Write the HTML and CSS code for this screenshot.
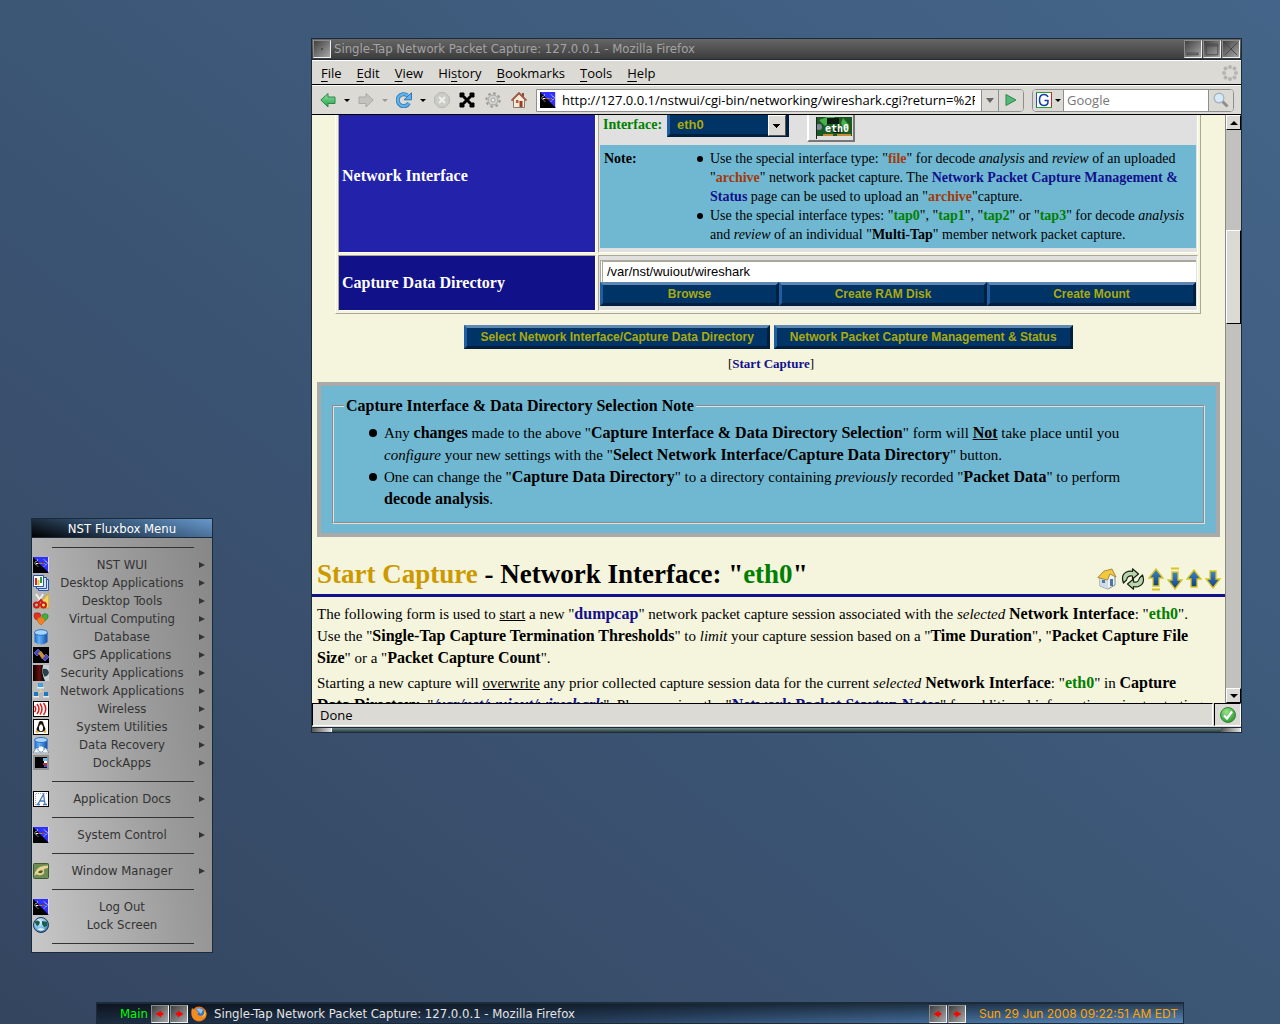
FILE: index.html
```html
<!DOCTYPE html>
<html lang="en">
<head>
<meta charset="utf-8">
<title>Single-Tap Network Packet Capture</title>
<link rel="stylesheet" href="styles.css">
</head>
<body class="desktop">

<svg class="defs" aria-hidden="true">
  <defs>
    <linearGradient id="gGreen" x1="0" y1="0" x2="0" y2="1"><stop offset="0" stop-color="#8fe0a0"/><stop offset="1" stop-color="#25a04c"/></linearGradient>
    <linearGradient id="gBlue" x1="0" y1="0" x2="0" y2="1"><stop offset="0" stop-color="#3f86cf"/><stop offset="1" stop-color="#123f83"/></linearGradient>
    <linearGradient id="gCyl" x1="0" y1="0" x2="1" y2="0"><stop offset="0" stop-color="#1769c9"/><stop offset=".35" stop-color="#63b2f6"/><stop offset="1" stop-color="#0e4fae"/></linearGradient>
    <radialGradient id="gOk" cx=".4" cy=".3" r=".7"><stop offset="0" stop-color="#9be38a"/><stop offset="1" stop-color="#2f9a36"/></radialGradient>
    <radialGradient id="gGlobe" cx=".4" cy=".3" r=".8"><stop offset="0" stop-color="#e6f6ff"/><stop offset=".6" stop-color="#6db4e0"/><stop offset="1" stop-color="#1c4a7c"/></radialGradient>
    <linearGradient id="gEye" x1="0" y1="0" x2="1" y2="0"><stop offset="0" stop-color="#0a0000"/><stop offset=".4" stop-color="#6a0f0c"/><stop offset=".6" stop-color="#101010"/></linearGradient>
    <symbol id="nst" viewBox="0 0 16 16">
      <rect width="16" height="16" fill="#000"/><path d="M0 0H16V16Z" fill="#3030ff"/>
      <path d="M15.500 0V15.500" stroke="#d8d8f8"/>
      <path d="M5 2.500L1.500 6L5 9.500M11 2.500L14.500 6L11 9.500" fill="none" stroke="#fff" stroke-dasharray="1.500 .700"/>
      <path d="M3 6.500H5" stroke="#fff"/><path d="M5 6.500H7" stroke="#f22"/><path d="M7 6.500H9" stroke="#2c2"/><path d="M9 6.500H11" stroke="#f22"/><path d="M11 6.500H12" stroke="#2c2"/>
    </symbol>
    <symbol id="arrowUp" viewBox="0 0 16 20"><path d="M8 1L15 10H11V18H5V10H1Z" fill="url(#gBlue)" stroke="#d8c61c" stroke-width="1.300"/></symbol>
    <symbol id="arrowDown" viewBox="0 0 16 20"><path d="M8 19L15 10H11V2H5V10H1Z" fill="url(#gBlue)" stroke="#d8c61c" stroke-width="1.300"/></symbol>
    <symbol id="redLeft" viewBox="0 0 16 16"><path d="M4 8L9 5V7H11V9H9V11Z" fill="#f00" stroke="#f00" stroke-width=".5"/></symbol>
    <symbol id="redRight" viewBox="0 0 16 16"><path d="M12 8L7 5V7H5V9H7V11Z" fill="#f00" stroke="#f00" stroke-width=".5"/></symbol>
  </defs>
</svg>

<main class="browser" aria-label="Mozilla Firefox">
  <header class="titlebar">
    <button class="bevel" aria-label="Stick"><svg viewBox="0 0 18 18"><rect x="8" y="8" width="2" height="2" fill="#444"/></svg></button>
    <h1 class="title">Single-Tap Network Packet Capture: 127.0.0.1 - Mozilla Firefox</h1>
    <button class="bevel" aria-label="Minimize"><svg viewBox="0 0 18 18"><rect x="2.500" y="13.500" width="12" height="2" fill="none" stroke="#444"/></svg></button>
    <button class="bevel" aria-label="Maximize"><svg viewBox="0 0 18 18"><path d="M2.500 3.500H15.500V15.500H2.500ZM2.500 5.500H15" fill="none" stroke="#444"/></svg></button>
    <button class="bevel" aria-label="Close"><svg viewBox="0 0 18 18"><path d="M2 2L16 16M16 2L2 16" stroke="#444"/></svg></button>
  </header>

  <nav class="menubar">
    <button><u>F</u>ile</button><button><u>E</u>dit</button><button><u>V</u>iew</button><button>Hi<u>s</u>tory</button><button><u>B</u>ookmarks</button><button><u>T</u>ools</button><button><u>H</u>elp</button>
    <svg class="throbber" viewBox="0 0 16 16"><g fill="#b4b4b0"><circle cx="8" cy="2" r="2"/><circle cx="12.500" cy="3.500" r="2"/><circle cx="14" cy="8" r="2"/><circle cx="12.500" cy="12.500" r="2"/><circle cx="8" cy="14" r="2"/><circle cx="3.500" cy="12.500" r="2"/><circle cx="2" cy="8" r="2"/><circle cx="3.500" cy="3.500" r="2"/></g></svg>
  </nav>

  <div class="toolbar">
    <button class="tool" aria-label="Back"><svg viewBox="0 0 16 16"><path d="M.8 8L8 1.500V5H15V11.500H8V15Z" fill="url(#gGreen)" stroke="#2a8a48"/></svg></button>
    <button class="drop" aria-label="Back history"></button>
    <button class="tool" aria-label="Forward"><svg viewBox="0 0 16 16"><path d="M15.200 8L8 1.500V5H1V11.500H8V15Z" fill="#c2c2be" stroke="#a9a9a5"/></svg></button>
    <button class="drop off" aria-label="Forward history"></button>
    <button class="tool" aria-label="Reload"><svg viewBox="0 0 16 16"><path d="M13 11A6 6 0 1 1 11.500 3.500" fill="none" stroke="#2a78b8" stroke-width="4"/><path d="M13 11A6 6 0 1 1 11.500 3.500" fill="none" stroke="#62b2ea" stroke-width="2.400"/><path d="M15.500 .8V7.800H8Z" fill="#62b2ea" stroke="#2a78b8"/></svg></button>
    <button class="drop" aria-label="Reload options"></button>
    <button class="tool" aria-label="Stop"><svg viewBox="0 0 16 16"><path d="M5 .7H11L15.300 5V11L11 15.300H5L.7 11V5Z" fill="#cbcbc7" stroke="#b5b5b1"/><path d="M5 5L11 11M11 5L5 11" stroke="#efefec" stroke-width="2"/></svg></button>
    <button class="tool solo" aria-label="Clear"><svg viewBox="0 0 16 16"><path d="M2.500 2.500L13.500 13.500M13.500 2.500L2.500 13.500" stroke="#000" stroke-width="3"/><path d="M1 1H5V3H3V5H1ZM11 1H15V5H13V3H11ZM1 11H3V13H5V15H1ZM15 11V15H11V13H13V11Z" stroke="#000"/></svg></button>
    <button class="tool solo" aria-label="Settings"><svg viewBox="0 0 16 16"><circle cx="8" cy="8" r="6.700" fill="none" stroke="#9a9a96" stroke-width="2" stroke-dasharray="2.600 2.660"/><circle cx="8" cy="8" r="5" fill="#d2d2ce" stroke="#a4a4a0"/><circle cx="8" cy="8" r="2" fill="#eee" stroke="#a4a4a0"/></svg></button>
    <button class="tool solo" aria-label="Home"><svg viewBox="0 0 16 16"><rect x="11" y="1" width="2" height="5" fill="#8c4a3a"/><path d="M2.500 7.500V15.500H13.500V7.500L8 2Z" fill="#f3ead8" stroke="#8a7a68"/><path d="M.5 8.500L8 1L15.500 8.500" fill="none" stroke="#a25a4a" stroke-width="1.800"/><rect x="5" y="8" width="2.500" height="3" fill="#b5563c"/><rect x="8.500" y="9" width="3" height="6" fill="#a03c22"/></svg></button>
    <div class="field url">
      <svg class="i16" viewBox="0 0 16 16"><use href="#nst"/></svg>
      <input aria-label="Location" value="http://127.0.0.1/nstwui/cgi-bin/networking/wireshark.cgi?return=%2Fnstwui">
      <button class="seg open" aria-label="Show history"></button>
      <button class="seg go" aria-label="Go"><svg viewBox="0 0 12 14"><path d="M1 1.500L11 7L1 12.500Z" fill="#55b878" stroke="#2a8a48"/></svg></button>
    </div>
    <div class="field search">
      <button class="engine" aria-label="Search engine"><svg class="i16" viewBox="0 0 16 16"><rect x=".5" y=".5" width="15" height="15" fill="#fff"/><path d="M.5 0V16" stroke="#2050e0"/><path d="M0 .5H16" stroke="#2aa02a"/><path d="M15.500 0V16" stroke="#e02020"/><path d="M0 15.500H16" stroke="#2aa02a"/><path d="M12 5Q11 2.500 8 2.500Q3.500 2.500 3.500 8T8 13.500Q12 13.500 12 9.500V8.500H8.500" fill="none" stroke="#1838b0" stroke-width="1.500"/></svg><i class="tri"></i></button>
      <input aria-label="Search" placeholder="Google">
      <button class="seg mag" aria-label="Search"><svg class="i16" viewBox="0 0 16 16"><path d="M9.500 9.500L14.500 14.500" stroke="#8d8d8d" stroke-width="3"/><circle cx="6" cy="6" r="4.800" fill="#d6ebf8" stroke="#a9b4bc" stroke-width="1.400"/></svg></button>
    </div>
  </div>

  <div class="view">
    <div class="page">
      <table class="form">
        <colgroup><col class="namecol"><col></colgroup>
        <tbody>
        <tr class="first">
          <th scope="row">Network Interface</th>
          <td>
            <div class="iface">
              <label for="iface">Interface:</label>
              <span class="picker"><select id="iface"><option>eth0</option></select></span>
              <button class="nic" aria-label="eth0"><svg viewBox="0 0 37 22"><rect x="1" width="36" height="19" fill="#1c5a24"/><path d="M4 3L12 0H20L10 9ZM28 1L34 8L30 14L26 6ZM8 13L16 17" fill="#48b04a"/><path d="M12 1H24V7H12ZM18 12H26V16H18Z" fill="#0c1c10"/><circle cx="4" cy="10" r="3" fill="#7c8c9c"/><path d="M8 18H18M22 18H36" stroke="#c88c30" stroke-width="2"/><path d="M1.500 0V22" stroke="#222"/><text x="10" y="15" class="nictext">eth0</text></svg></button>
            </div>
            <div class="note">
              <b>Note:</b>
              <ul>
                <li>Use the special interface type: "<b class="red">file</b>" for decode <i>analysis</i> and <i>review</i> of an uploaded<br>"<b class="red">archive</b>" network packet capture. The <a href="#">Network Packet Capture Management &amp;<br>Status</a> page can be used to upload an "<b class="red">archive</b>"capture.</li>
                <li>Use the special interface types: "<b class="green">tap0</b>", "<b class="green">tap1</b>", "<b class="green">tap2</b>" or "<b class="green">tap3</b>" for decode <i>analysis</i><br>and <i>review</i> of an individual "<b>Multi-Tap</b>" member network packet capture.</li>
              </ul>
            </div>
          </td>
        </tr>
        <tr class="second">
          <th scope="row">Capture Data Directory</th>
          <td>
            <input class="path" aria-label="Capture Data Directory" value="/var/nst/wuiout/wireshark">
            <div class="trio"><button class="btn">Browse</button><button class="btn">Create RAM Disk</button><button class="btn">Create Mount</button></div>
          </td>
        </tr>
        </tbody>
      </table>

      <div class="actions"><button class="btn">Select Network Interface/Capture Data Directory</button><button class="btn">Network Packet Capture Management &amp; Status</button></div>
      <p class="jump">[<a href="#start">Start Capture</a>]</p>

      <section class="notice">
        <fieldset>
          <legend>Capture Interface &amp; Data Directory Selection Note</legend>
          <ul>
            <li>Any <b>changes</b> made to the above "<b>Capture Interface &amp; Data Directory Selection</b>" form will <b><u>Not</u></b> take place until you<br><i>configure</i> your new settings with the "<b>Select Network Interface/Capture Data Directory</b>" button.</li>
            <li>One can change the "<b>Capture Data Directory</b>" to a directory containing <i>previously</i> recorded "<b>Packet Data</b>" to perform<br><b>decode analysis</b>.</li>
          </ul>
        </fieldset>
      </section>

      <div class="heading" id="start">
        <h2><span class="gold">Start Capture</span> - Network Interface: "<span class="green">eth0</span>"</h2>
        <div class="jumps">
          <a href="#" aria-label="Home"><svg width="22" height="22" viewBox="0 0 20 22"><path d="M3 9V18L11 21L18 17V8L13 3Z" fill="#eef2f6" stroke="#7f8a96"/><path d="M3 9L11 12V21L3 18Z" fill="#cfdbe6"/><path d="M.8 9.500L7 3L15 1L19 9L13 6L10.500 12Z" fill="#f2c840" stroke="#96782a" stroke-width=".8"/><rect x="13" y="11" width="3" height="7" fill="#4a78a8"/><rect x="5" y="12" width="3" height="3" fill="#4a78a8"/></svg></a>
          <a href="#" aria-label="Reload"><svg width="24" height="22" viewBox="0 0 23 22"><g fill="#b9d6b0" stroke="#17240f" stroke-width="1.200" stroke-linejoin="round"><path d="M2 15Q-1 7 5 4Q8 2.500 11 3.500V.8L17 6L11 11V8Q6 7 5 12Z"/><path d="M21 7Q24 15 18 18Q15 19.500 12 18.500V21.200L6 16L12 11V14Q17 15 18 10Z"/></g></svg></a>
          <a href="#" aria-label="Top"><svg width="16" height="24" viewBox="0 0 16 24"><use href="#arrowUp" width="16" height="20" y="1"/><path d="M4 22.500H12" stroke="#d8c61c" stroke-width="2"/></svg></a>
          <a href="#" aria-label="Bottom"><svg width="16" height="24" viewBox="0 0 16 24"><path d="M4 1.500H12" stroke="#d8c61c" stroke-width="2"/><use href="#arrowDown" width="16" height="20" y="3"/></svg></a>
          <a href="#" aria-label="Previous"><svg width="16" height="20"><use href="#arrowUp"/></svg></a>
          <a href="#" aria-label="Next"><svg width="16" height="20"><use href="#arrowDown"/></svg></a>
        </div>
      </div>

      <p class="prose">The following form is used to <u>start</u> a new "<a href="#">dumpcap</a>" network packet capture session associated with the <i>selected</i> <b>Network Interface</b>: "<b class="green">eth0</b>".<br>Use the "<b>Single-Tap Capture Termination Thresholds</b>" to <i>limit</i> your capture session based on a "<b>Time Duration</b>", "<b>Packet Capture File<br>Size</b>" or a "<b>Packet Capture Count</b>".</p>
      <p class="prose">Starting a new capture will <u>overwrite</u> any prior collected capture session data for the current <i>selected</i> <b>Network Interface</b>: "<b class="green">eth0</b>" in <b>Capture<br>Data Directory</b>: "<a href="#"><i>/var/nst/wuiout/wireshark</i></a>". Please review the "<a href="#">Network Packet Startup Notes</a>" for additional information prior to starting</p>
    </div>
    <div class="scroll" aria-hidden="true"><span class="knob up"></span><span class="track"><span class="thumb"></span></span><span class="knob down"></span></div>
  </div>

  <footer class="status">
    <span class="done">Done</span>
    <span class="ok"><svg class="i16" viewBox="0 0 16 16"><circle cx="8" cy="8" r="7.500" fill="url(#gOk)" stroke="#2f8a36"/><path d="M4 8.500L7 11.500L12 4.500" fill="none" stroke="#fff" stroke-width="2.200"/></svg></span>
  </footer>
  <div class="handle"><i></i><i></i></div>
</main>

<aside class="fluxmenu" aria-label="NST Fluxbox Menu">
  <h2>NST Fluxbox Menu</h2>
  <ul>
    <li class="sep"></li>
    <li><svg viewBox="0 0 16 16"><use href="#nst"/></svg><button class="sub">NST WUI</button></li>
    <li><svg viewBox="0 0 16 16"><path d="M5.500 4.500H15.500V15.500H5.500Z" fill="#d0e0f8" stroke="#2a50a8"/><path d="M3.500 2.500H13.500V13.500H3.500Z" fill="#d0e0f8" stroke="#2a50a8"/><path d="M.5 .5H10.500V11.500H.5Z" fill="#fff" stroke="#2a50a8"/><path d="M3 3V10" stroke="#e02020" stroke-width="2"/><path d="M5.500 5V10" stroke="#e0c020" stroke-width="2"/><path d="M8 2V8" stroke="#20a030" stroke-width="2"/></svg><button class="sub">Desktop Applications</button></li>
    <li><svg viewBox="0 0 16 16"><path d="M16 0V15H2Z" fill="#f2d460" stroke="#c8a020"/><path d="M3 1L10 11M10 1L4 11" stroke="#eee" stroke-width="2"/><circle cx="3.500" cy="12" r="2.500" fill="none" stroke="#c81c1c" stroke-width="2"/><circle cx="10.500" cy="12" r="2.500" fill="none" stroke="#c81c1c" stroke-width="2"/><path d="M5 10L8 7L10 10" fill="none" stroke="#c81c1c" stroke-width="2"/></svg><button class="sub">Desktop Tools</button></li>
    <li><svg viewBox="0 0 16 16"><path d="M9 4Q12 1 15 4Q16 7 12 10Q8 8 9 4Z" fill="#3cb43c" stroke="#1c6a1c" stroke-width=".5"/><path d="M1 5Q1 1 4 2Q7 1 8 4Q7 8 4 9Q1 8 1 5Z" fill="#e83020" stroke="#8c1010" stroke-width=".5"/><path d="M4 9Q5 5 8 7Q11 5 12 9Q11 12 8 14Q5 12 4 9Z" fill="#f08020" stroke="#a06008" stroke-width=".5"/></svg><button class="sub">Virtual Computing</button></li>
    <li><svg viewBox="0 0 16 16"><path d="M1.500 3V13Q8 18 14.500 13V3Z" fill="url(#gCyl)"/><ellipse cx="8" cy="3.500" rx="6.500" ry="2.800" fill="#a8d4fa" stroke="#2a70c8"/></svg><button class="sub">Database</button></li>
    <li><svg viewBox="0 0 16 16"><rect width="16" height="16" fill="#000"/><path d="M1 6L5 2L8 5L4 9ZM9 11L13 7L16 10L12 14Z" fill="#4848b8" stroke="#8484e0" stroke-width=".6"/><path d="M5 6L8 4L12 9L9 12Z" fill="#c89040"/></svg><button class="sub">GPS Applications</button></li>
    <li><svg viewBox="0 0 16 16"><rect width="16" height="16" fill="url(#gEye)"/><path d="M10 0H16V16H12Q8 8 10 0Z" fill="#c9d0d4"/><path d="M10 4Q15 3 16 8Q13 13 11 11Q9 7 10 4Z" fill="#28404c"/></svg><button class="sub">Security Applications</button></li>
    <li><svg viewBox="0 0 16 16"><path d="M8 5V9M3 11L8 8L13 11" stroke="#d8d8a0" fill="none"/><path d="M5 0H10V4H5Z" fill="#40a0e0"/><path d="M4 4H11V5.500H4ZM0 13H6V14.500H0ZM10 13H16V14.500H10Z" fill="#e4e8ec"/><path d="M1 9H5V13H1ZM11 9H15V13H11Z" fill="#1c78c0"/></svg><button class="sub">Network Applications</button></li>
    <li><svg viewBox="0 0 16 16"><rect x=".5" y=".5" width="15" height="15" fill="#fff" stroke="#000"/><path d="M1.500 5Q4 8 1.500 11M4 3Q8 8 4 13M7 2.500Q11 8 7 13.500M10.500 2Q15 8 10.500 14" fill="none" stroke="#e01818" stroke-width="1.500"/></svg><button class="sub">Wireless</button></li>
    <li><svg viewBox="0 0 16 16"><rect x=".5" y=".5" width="15" height="15" fill="#fff" stroke="#000"/><path d="M8 2Q10.500 2 10.500 5L12.500 10Q12 13 8 13T3.500 10L5.500 5Q5.500 2 8 2Z" fill="#111"/><ellipse cx="8" cy="9" rx="2" ry="3.300" fill="#fff"/><path d="M7 5H9L8 6.500ZM3 11L6 13L4 14L2.500 13ZM13 11L10 13L12 14L13.500 13Z" fill="#f0b020"/></svg><button class="sub">System Utilities</button></li>
    <li><svg viewBox="0 0 16 16"><path d="M1.500 3V12H14.500V3Z" fill="url(#gCyl)"/><ellipse cx="8" cy="3" rx="6.500" ry="2.500" fill="#a8d4fa" stroke="#2a70c8"/><path d="M0 16L3 11H13L16 16Z" fill="#e8f0f8" stroke="#4a6a8c" stroke-width=".6"/><circle cx="8" cy="12" r="3" fill="#fff" stroke="#3a70b0" stroke-dasharray="1.500 1"/></svg><button class="sub">Data Recovery</button></li>
    <li><svg viewBox="0 0 16 16"><path d="M1 1H15V14H1Z" fill="#000" stroke="#909090" stroke-width="2"/><rect x="10" y="3" width="4" height="3" fill="#5cc0f0"/><rect x="11" y="6" width="3" height="2" fill="#fff"/><rect x="10" y="8" width="4" height="2" fill="#e02020"/><rect x="11" y="10" width="3" height="2" fill="#3050e0"/></svg><button class="sub">DockApps</button></li>
    <li class="sep"></li>
    <li><svg viewBox="0 0 16 16"><rect x=".5" y=".5" width="15" height="15" fill="#fff" stroke="#000"/><path d="M3 2.500H14M2.500 3V14" stroke="#9cb4d4" stroke-dasharray="1 1"/><path d="M3.500 13.500H7M10 13.500H14M5 13L10.500 3.500L12 13M6.500 10H11.500" fill="none" stroke="#4a7ab4" stroke-width="1.300"/></svg><button class="sub">Application Docs</button></li>
    <li class="sep"></li>
    <li><svg viewBox="0 0 16 16"><use href="#nst"/></svg><button class="sub">System Control</button></li>
    <li class="sep"></li>
    <li><svg viewBox="0 0 16 16"><rect x=".5" y=".5" width="15" height="15" rx="1" fill="#6c8c54" stroke="#3f5a30"/><path d="M1 13Q3 4 10 3L15 2.500V5Q9 6 11 8Q12 11 8 12Q5 13 4 11" fill="#e8d490"/><path d="M5 9Q8 6 10 8Q9 11 6 10Z" fill="#4a5a34"/></svg><button class="sub">Window Manager</button></li>
    <li class="sep"></li>
    <li><svg viewBox="0 0 16 16"><use href="#nst"/></svg><button>Log Out</button></li>
    <li><svg viewBox="0 0 16 16"><circle cx="8" cy="8" r="7.500" fill="url(#gGlobe)" stroke="#1c3a5c"/><path d="M1.500 5Q4 2 7 5L6 8L4 9ZM9 4L14.500 5L14 9L11 10L9 7Z" fill="#1c5c4c"/><path d="M4 12Q8 10.500 12 12Q8 15.500 4 12Z" fill="#e8f6ff"/></svg><button>Lock Screen</button></li>
    <li class="sep"></li>
  </ul>
</aside>

<footer class="taskbar">
  <span class="workspace">Main</span>
  <button class="bevel" aria-label="Previous workspace"><svg><use href="#redLeft"/></svg></button>
  <button class="bevel" aria-label="Next workspace"><svg><use href="#redRight"/></svg></button>
  <button class="task"><svg class="i16" viewBox="0 0 16 16"><circle cx="8" cy="8" r="7.500" fill="#e8701a"/><circle cx="8.500" cy="7" r="5" fill="#3c6cc0"/><path d="M5 3Q9 1 12 4L10 8L7 5Z" fill="#8cc4f0"/><path d="M1 2L3 4Q5 3 6 5L8 7L6 8Q8 11 12 9Q15 7 14 3Q17 8 14 12Q8 17 3 13Q-1 9 1 2Z" fill="#f08c20"/><path d="M12.500 4Q14.500 8 11 11Q14 11 14.500 7Z" fill="#f8d040"/></svg><span>Single-Tap Network Packet Capture: 127.0.0.1 - Mozilla Firefox</span></button>
  <button class="bevel" aria-label="Previous window"><svg><use href="#redLeft"/></svg></button>
  <button class="bevel" aria-label="Next window"><svg><use href="#redRight"/></svg></button>
  <time class="clock">Sun 29 Jun 2008 09:22:51 AM EDT</time>
</footer>

</body>
</html>
```

FILE: styles.css
```css
* { box-sizing: border-box; }

:root {
  --flux: "DejaVu Sans Condensed", "DejaVu Sans", sans-serif;
  --gtk: "Open Sans", "Noto Sans", sans-serif;
  --serif: "Liberation Serif", "Times New Roman", serif;
  --sans: "Liberation Sans", Arial, sans-serif;
  --frame: #1c2b3a;
  --face: #dcdad5;
  --paper: #f5f4dc;
  --sky: #70b8d2;
  --navy: #11118c;
}

body, h1, h2, p, ul, fieldset { margin: 0; padding: 0; }
ul { list-style: none; }
button, input, select { margin: 0; padding: 0; border: 0; border-radius: 0; background: none; font: inherit; color: inherit; }
svg { display: block; }
.defs { position: absolute; width: 0; height: 0; }
.i16 { width: 16px; height: 16px; flex: none; }

.desktop {
  min-height: 100vh;
  position: relative;
  overflow: hidden;
  background: linear-gradient(to bottom left, #446589, #3c5676 50%, #34455f);
  font: 13px/18px var(--flux);
}

.bevel {
  width: 18px;
  height: 18px;
  flex: none;
  border: 1px solid;
  border-color: #8c8c8c #f0f0f0 #f0f0f0 #8c8c8c;
  background: linear-gradient(135deg, #404040, #a8a8a8);
}
.bevel svg { width: 100%; height: 100%; }

/* Browser window */
.browser {
  position: absolute;
  top: 38px;
  left: 311px;
  right: 38px;
  bottom: 291px;
  display: flex;
  flex-direction: column;
  border: 1px solid var(--frame);
  background: var(--face);
}
.titlebar {
  flex: none;
  display: flex;
  align-items: center;
  gap: 1px;
  height: 21px;
  padding: 0 1px;
  border-bottom: 1px solid var(--frame);
  background: linear-gradient(#666, #3c3c3c);
}
.title {
  flex: 1;
  padding-left: 2px;
  overflow: hidden;
  white-space: nowrap;
  font-size: 13px;
  line-height: 20px;
  font-weight: normal;
  color: #a4a4a4;
}

.menubar {
  flex: none;
  display: flex;
  align-items: center;
  gap: 15px;
  height: 25px;
  padding: 0 3px 0 9px;
  border-top: 1px solid #fff;
  border-bottom: 1px solid #000;
  font: 13px/18px var(--gtk);
}
.menubar u { text-underline-offset: 3px; }
.throbber { width: 16px; height: 16px; margin-left: auto; }

.toolbar {
  flex: none;
  display: flex;
  align-items: center;
  gap: 8px;
  height: 30px;
  padding: 0 7px 0 8px;
  border-top: 1px solid #fff;
  border-bottom: 1px solid #000;
  font: 13px/18px var(--gtk);
}
.tool { width: 16px; height: 16px; flex: none; }
.solo { margin: 0 1px; }
.drop { width: 6px; height: 16px; flex: none; }
.drop::before, .tri {
  content: "";
  display: block;
  width: 0;
  border: 3px solid transparent;
  border-top-color: #000;
  border-bottom-width: 0;
}
.off::before { border-top-color: #999; }

.field {
  display: flex;
  align-items: center;
  height: 23px;
  border: 1px solid #8e8e8e;
  background: #fff;
}
.field input { flex: 1; min-width: 0; height: 20px; }
.url { flex: 1; border-radius: 0 4px 4px 0; overflow: hidden; padding-left: 3px; }
.url input { margin: 0 6px; }
.seg {
  display: grid;
  place-items: center;
  flex: none;
  width: 25px;
  height: 21px;
  border-left: 1px solid #8e8e8e;
  background: #dcdad5;
}
.open { width: 17px; }
.open::before { content: ""; border: 4px solid transparent; border-top: 5px solid #666; border-bottom: 0; }
.go svg { width: 12px; height: 14px; }
.search { width: 202px; flex: none; border-radius: 4px; overflow: hidden; }
.engine {
  display: flex;
  align-items: center;
  gap: 3px;
  width: 31px;
  height: 21px;
  padding-left: 3px;
  border-right: 1px solid #8e8e8e;
  background: #dcdad5;
}
.search input { padding-left: 3px; }
.search input::placeholder { color: #777; opacity: 1; }

/* Page viewport */
.view { flex: 1; min-height: 0; display: flex; }
.page {
  flex: 1;
  min-width: 0;
  overflow: hidden;
  background: var(--paper);
  font: 15px/22px var(--serif);
  color: #000;
}
.page b, .page a, .page th { font-weight: bold; }
.page a { color: var(--navy); text-decoration: none; }
.page .green { color: #008000; }
.page .red { color: #a33a0c; }
.gold { color: #cc9900; }

.form {
  width: calc(100% - 47px);
  margin: -2px 24px 0 23px;
  table-layout: fixed;
  border: 1px solid;
  border-color: #fff #aca899 #aca899 #fff;
  border-top: 0;
  border-collapse: separate;
  border-spacing: 2px;
}
.namecol { width: 258px; }
.form th, .form td {
  border: 1px solid;
  border-color: #aca899 #fff #fff #aca899;
}
.form th {
  padding: 0 3px;
  text-align: left;
  font-size: 16px;
  color: #fff;
}
.form td { padding: 4px 1px; background: #e0e0e0; }
.form .first th { background: #2222aa; }
.form .first th, .form .first td { border-top: 0; padding-top: 0; }
.form .first th { padding-bottom: 16px; }
.form .second th { background: #11118a; }
.form .second td { padding: 4px 1px; }

.iface { display: flex; align-items: flex-start; height: 30px; padding-left: 3px; }
.iface label { width: 64px; flex: none; font-size: 14px; line-height: 20px; font-weight: bold; color: #008000; }
.picker { position: relative; display: grid; width: 122px; height: 22px; }
.picker select {
  appearance: none;
  width: 100%;
  height: 22px;
  padding-left: 7px;
  border: 3px solid;
  border-color: #1f5f9f #001f3f #001f3f #1f5f9f;
  border-top: 0;
  background: #003366;
  font: bold 13px/19px var(--sans);
  color: #a9aa10;
}
.picker::after {
  content: "";
  position: absolute;
  top: 0;
  right: 3px;
  width: 16px;
  height: 19px;
  border: 1px solid;
  border-color: #fff #555 #555 #fff;
  background: linear-gradient(#000, #000) 4px 8px / 7px 1px no-repeat, linear-gradient(#000, #000) 5px 9px / 5px 1px no-repeat, linear-gradient(#000, #000) 6px 10px / 3px 1px no-repeat, linear-gradient(#000, #000) 7px 11px / 1px 1px no-repeat, var(--face);
}
.nic {
  width: 48px;
  height: 27px;
  margin-left: 18px;
  padding: 0 4px 0 6px;
  border: 2px solid;
  border-color: #fff #777 #777 #fff;
  border-top: 0;
  background: #e0e0e0;
}
.nic svg { width: 37px; height: 22px; }
.nictext { font: bold 10px "DejaVu Sans Mono", monospace; fill: #fff; }

.note {
  display: grid;
  grid-template-columns: 96px 1fr;
  padding: 4px;
  background: var(--sky);
  font-size: 14px;
  line-height: 19px;
}
.note li, .notice li { position: relative; white-space: nowrap; }
.note li { padding-left: 10px; }
.note li::before, .notice li::before {
  content: "";
  position: absolute;
  top: 7px;
  left: -3px;
  width: 6px;
  height: 6px;
  border-radius: 3px;
  background: #000;
}

.path {
  display: block;
  width: 100%;
  height: 22px;
  padding: 0 0 2px 4px;
  border-top: 2px solid #aca899;
  border-left: 3px double #aca899;
  background: #fff;
  font: 13px/18px var(--sans);
}
.trio { display: grid; grid-template-columns: 179fr 208fr 209fr; }
.btn {
  height: 24px;
  border: 3px solid;
  border-color: #5f87af #001f3f #001f3f #1f5f9f;
  background: #003366;
  font: bold 12px/16px var(--sans);
  white-space: nowrap;
  color: #a9aa10;
}
.actions { display: flex; justify-content: center; gap: 4px; padding: 11px 0 4px; }
.actions .btn { padding: 0 13px; }
.jump { padding-left: 5px; text-align: center; font-size: 13px; }

.notice { margin: 7px 5px 0; padding: 9px 11px; border: 4px solid #a9a9a9; background: var(--sky); }
.notice fieldset { height: 129px; border: 2px groove #e0e0e0; }
.notice legend { margin-left: 10px; padding: 0 2px; font-size: 16px; line-height: 22px; font-weight: bold; }
.notice ul { padding: 5px 0 0 50px; }
.notice li::before { left: -15px; width: 8px; height: 8px; border-radius: 4px; }
.notice b, .prose b, .prose a { font-size: 16px; line-height: 20px; }

.heading {
  display: flex;
  align-items: center;
  justify-content: space-between;
  margin-top: 19px;
  padding: 0 4px 0 5px;
  height: 41px;
  border-bottom: 3px solid var(--navy);
}
.heading h2 { padding-bottom: 2px; font-size: 27px; line-height: 36px; white-space: nowrap; }
.jumps { display: flex; align-items: center; gap: 3px; padding-top: 8px; }
.prose { padding: 6px 0 0 5px; white-space: nowrap; }
.prose + .prose { padding-top: 3px; }

.scroll { flex: none; display: flex; flex-direction: column; width: 16px; border-left: 1px solid #8c8a86; background: #c3c1bd; }
.knob {
  flex: none;
  display: grid;
  place-items: center;
  height: 15px;
  border: 1px solid;
  border-color: #fff #000 #000 #fff;
  background: var(--face);
}
.knob::before { content: ""; border: 4px solid transparent; }
.up::before { border-bottom-color: #000; border-top-width: 0; }
.down::before { border-top-color: #000; border-bottom-width: 0; }
.track { flex: 1; padding-top: 100px; }
.thumb { display: block; height: 94px; border: 1px solid; border-color: #fff #000 #000 #fff; background: var(--face); }

.status { flex: none; display: flex; gap: 1px; height: 24px; padding-bottom: 1px; font: 13px/22px var(--gtk); }
.done, .ok { border: 1px solid; border-color: #000 #fff #fff #000; }
.done { flex: 1; padding-left: 7px; }
.ok { width: 27px; display: grid; place-items: center; }
.handle { flex: none; display: flex; justify-content: space-between; height: 5px; border-top: 1px solid var(--frame); background: linear-gradient(#6a8888, #2c3c3e); }
.handle i { width: 20px; border-right: 1px solid #fff; background: linear-gradient(90deg, #555, #ddd); }

/* Root menu */
.fluxmenu {
  position: absolute;
  top: 518px;
  left: 31px;
  width: 182px;
  border: 1px solid var(--frame);
  background: linear-gradient(80deg, #c8c8c8, #9c9c9c 60%, #868686);
  color: #333;
}
.fluxmenu h2 {
  height: 19px;
  border-bottom: 1px solid var(--frame);
  background: linear-gradient(15deg, #000, #355373 50%, #6798cc);
  text-align: center;
  font-size: 13px;
  line-height: 20px;
  font-weight: normal;
  color: #fff;
}
.fluxmenu li { display: flex; align-items: center; height: 18px; padding-left: 1px; }
.fluxmenu li svg { width: 16px; height: 16px; flex: none; }
.fluxmenu button { position: relative; flex: 1; padding-right: 17px; line-height: 20px; text-align: center; }
.fluxmenu .sub::after {
  content: "";
  position: absolute;
  top: 7px;
  right: 7px;
  border: 3px solid transparent;
  border-left: 6px solid #333;
  border-right: 0;
}
.fluxmenu .sep { padding: 0 18px 0 20px; }
.sep::before { content: ""; flex: 1; height: 1px; background: #333; }

/* Toolbar */
.taskbar {
  position: absolute;
  bottom: 0;
  left: 96px;
  right: 96px;
  display: flex;
  align-items: center;
  gap: 1px;
  height: 22px;
  padding-left: 23px;
  border: 1px solid var(--frame);
  border-top-width: 2px;
  background: linear-gradient(#0008, #0000), linear-gradient(90deg, #1c2c42, #27405e 45%, #4a76a6 85%, #5a88ba);
  color: #fff;
}
.workspace { width: 30px; color: #0f0; }
.task { flex: 1; display: flex; align-items: center; gap: 7px; padding-left: 2px; color: #e4e4e4; }
.clock { width: 216px; padding-left: 12px; font: 12px/18px Inter, sans-serif; white-space: nowrap; color: #ffa500; }
```
